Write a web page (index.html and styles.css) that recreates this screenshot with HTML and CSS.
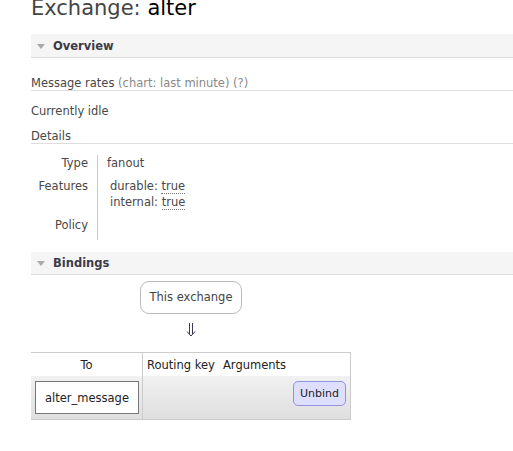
FILE: index.html
```html
<!DOCTYPE html>
<html lang="en">
<head>
    <meta charset="UTF-8">
    <meta name="viewport" content="width=device-width, initial-scale=1.0">
    <title>Exchange: alter</title>
    <link rel="stylesheet" href="styles.css">
</head>
<body>
    <div class="page">
        <h1>Exchange: <b>alter</b></h1>

        <div class="section">
            <h2 class="section-head"><span class="toggle"></span>Overview</h2>
            <h3 class="sub">Message rates <span class="hint">(chart: last minute) (?)</span></h3>
            <p class="idle">Currently idle</p>
            <h3 class="sub details-head">Details</h3>
            <table class="facts">
                <tr>
                    <th>Type</th>
                    <td>fanout</td>
                </tr>
                <tr>
                    <th>Features</th>
                    <td>
                        <div class="features">
                            durable: <abbr>true</abbr><br>
                            internal: <abbr>true</abbr>
                        </div>
                    </td>
                </tr>
                <tr class="last">
                    <th>Policy</th>
                    <td></td>
                </tr>
            </table>
        </div>

        <div class="section">
            <h2 class="section-head bindings-head"><span class="toggle"></span>Bindings</h2>
            <div class="bindings">
                <span class="node">This exchange</span>
                <svg class="arrow" width="10" height="14" viewBox="0 0 10 14">
                    <path d="M3.5 0V11M6.5 0V11M1 8.5L5 13L9 8.5" fill="none" stroke="#3a3a55" stroke-width="1"/>
                </svg>
                <table class="list">
                    <colgroup>
                        <col class="c-to">
                        <col class="c-key">
                        <col class="c-args">
                        <col class="c-act">
                    </colgroup>
                    <thead>
                        <tr>
                            <th class="to">To</th>
                            <th>Routing key</th>
                            <th class="args">Arguments</th>
                            <th></th>
                        </tr>
                    </thead>
                    <tbody>
                        <tr>
                            <td class="to"><span class="queue">alter_message</span></td>
                            <td></td>
                            <td></td>
                            <td class="act"><button class="unbind">Unbind</button></td>
                        </tr>
                    </tbody>
                </table>
            </div>
        </div>
    </div>
</body>
</html>
```

FILE: styles.css
```css
body, html {
    margin: 0;
    padding: 0;
    overflow: hidden;
    font-family: "DejaVu Sans", Verdana, sans-serif;
    font-size: 11.5px;
    color: #484848;
    background: #fff;
}
.page {
    padding-left: 31px;
}
h1 {
    margin: -2px 0 0;
    font-size: 21px;
    line-height: 21px;
    font-weight: normal;
    color: #444;
}
h1 b {
    font-weight: normal;
    color: #000;
}
.section-head {
    display: flex;
    align-items: center;
    margin: 15px 0 0;
    padding-left: 6px;
    height: 23px;
    font-size: 11.5px;
    font-weight: bold;
    color: #3c3c48;
    background-color: #f5f5f5;
    border-bottom: 1px solid #ddd;
}
.bindings-head {
    margin-top: 12px;
    height: 22px;
}
.toggle {
    width: 0;
    height: 0;
    margin: 1px 8px 0 0;
    border-left: 4.5px solid transparent;
    border-right: 4.5px solid transparent;
    border-top: 5px solid #aaa;
}
.sub {
    margin: 14px 0 0;
    padding-top: 4px;
    font-size: 11.5px;
    font-weight: normal;
    line-height: 14px;
    border-bottom: 1px solid #ddd;
}
.hint {
    color: #888;
}
.idle {
    margin: 9px 0 0;
    padding-top: 4px;
    line-height: 14px;
}
.details-head {
    margin-top: 7px;
}
.facts {
    margin-top: 11px;
    border-collapse: collapse;
    line-height: 16px;
}
.facts th {
    width: 57px;
    padding: 0 9px 7px 0;
    text-align: right;
    vertical-align: top;
    font-weight: normal;
    border-right: 1px solid #ccc;
}
.facts td {
    padding: 0 0 7px 9px;
    vertical-align: top;
}
.features {
    padding-left: 3px;
}
abbr {
    text-decoration: none;
    border-bottom: 1px dotted #777;
}
.bindings {
    width: 320px;
    display: flex;
    flex-direction: column;
    align-items: center;
}
.node {
    margin-top: 6px;
    padding: 7px 9px 8px;
    line-height: 16px;
    border: 1px solid #bbb;
    border-radius: 9px;
    color: #444;
}
.arrow {
    display: block;
    margin-top: 9px;
}
.list {
    align-self: stretch;
    margin-top: 15px;
    table-layout: fixed;
    width: 320px;
    border-spacing: 0;
    border-top: 1px solid #ccc;
    border-right: 1px solid #ccc;
    border-bottom: 1px solid #ccc;
    line-height: 16px;
    color: #222;
}
.c-to { width: 112px; }
.c-key { width: 75px; }
.c-args { width: 70px; }
.list th {
    padding: 4px 4px 3px;
    font-weight: normal;
    text-align: left;
    white-space: nowrap;
    background: #fff;
}
.list th.args {
    padding-left: 5px;
}
.list .to {
    text-align: center;
    border-right: 1px solid #ccc;
}
.list td {
    padding: 5px 3px 5px 4px;
    vertical-align: top;
    background: linear-gradient(#f1f1f1, #dfdfdf);
}
.queue {
    display: block;
    width: 104px;
    box-sizing: border-box;
    padding: 8px 0 7px;
    background: #fff;
    border: 1px solid #777;
    text-align: center;
}
.list td.act {
    padding-right: 4px;
    text-align: right;
}
.unbind {
    font-family: "DejaVu Sans", Verdana, sans-serif;
    font-size: 11px;
    line-height: 15px;
    padding: 4px 6px;
    color: #222;
    background-color: #dedeff;
    border: 1px solid #9292e0;
    border-radius: 5px;
}
```
